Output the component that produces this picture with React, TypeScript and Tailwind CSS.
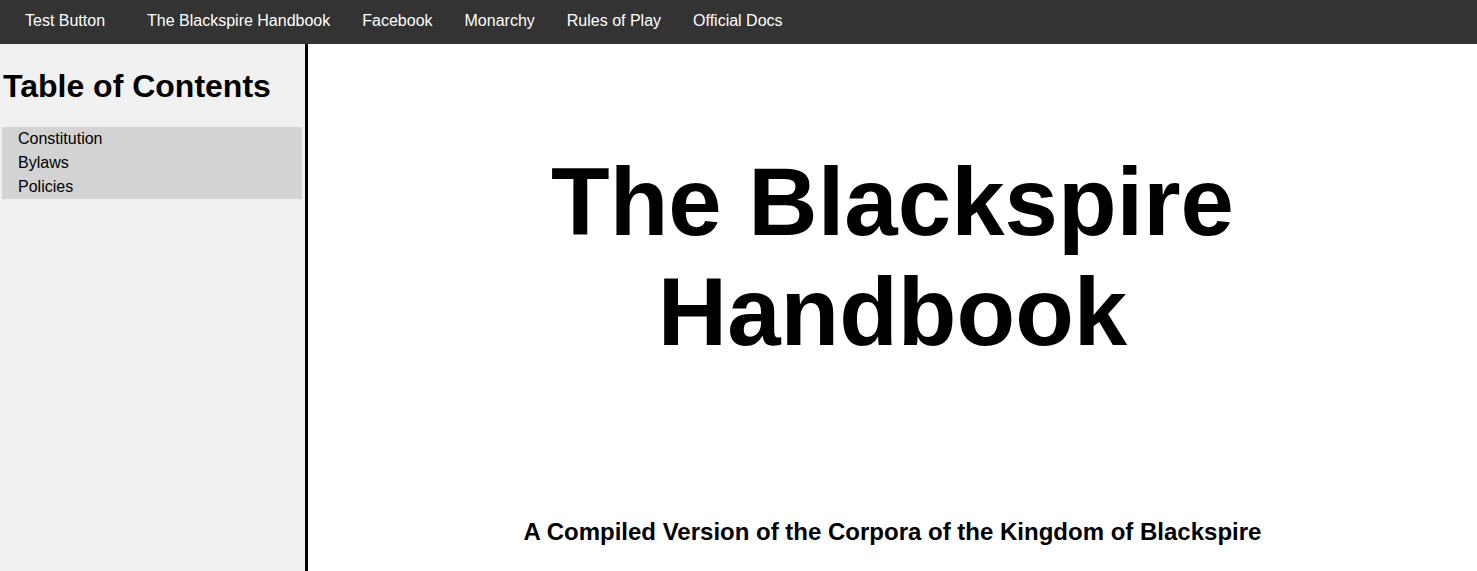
export default function App() {
  const links = ['The Blackspire Handbook', 'Facebook', 'Monarchy', 'Rules of Play', 'Official Docs'];
  const toc = ['Constitution', 'Bylaws', 'Policies'];

  return (
    <div className="flex min-h-screen flex-col font-['Liberation_Sans',Arial,sans-serif] text-black">
      <nav className="flex h-[44px] items-start bg-[#333333] pl-[25px] pt-[12px] text-[16px] leading-[18px] text-white">
        <a href="#" className="mr-[42px]">Test Button</a>
        <div className="flex gap-[32px]">
          {links.map((l) => (
            <a key={l} href="#">{l}</a>
          ))}
        </div>
      </nav>

      <div className="flex flex-1">
        <aside className="w-[308px] shrink-0 border-r-[3px] border-black bg-[#f1f1f1] pt-[24px]">
          <h2 className="pl-[3px] text-[32px] font-bold leading-[37px]">Table of Contents</h2>
          <ul className="mx-[2px] mt-[22px] w-[300px] bg-[#d3d3d3]">
            {toc.map((t) => (
              <li key={t} className="pl-[16px] text-[16px] leading-[24px]">
                <a href="#">{t}</a>
              </li>
            ))}
          </ul>
        </aside>

        <main className="flex flex-1 flex-col items-center pt-[103px] text-center">
          <h1 className="text-[96px] font-bold leading-[110px]">
            The Blackspire
            <br />
            Handbook
          </h1>
          <p className="mt-[151px] text-[24px] font-bold leading-[28px]">
            A Compiled Version of the Corpora of the Kingdom of Blackspire
          </p>
        </main>
      </div>
    </div>
  );
}
